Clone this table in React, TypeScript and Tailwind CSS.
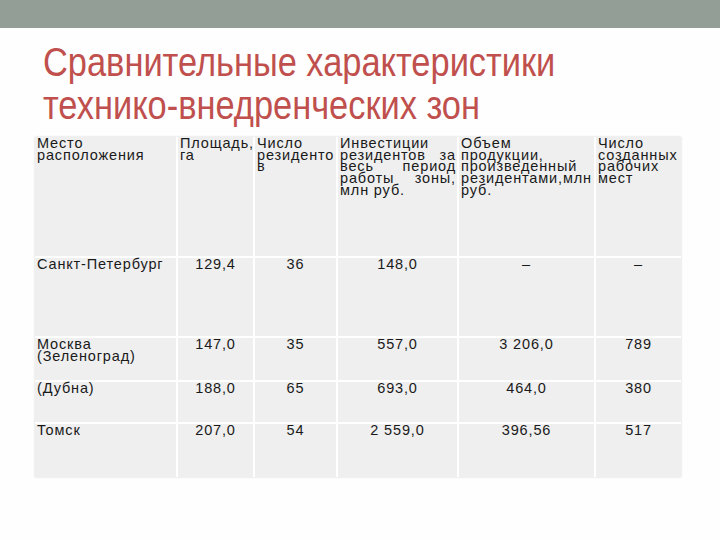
import React from 'react';

const cellText = "font-['Liberation_Sans',Arial,sans-serif] text-[14.5px] leading-[11.7px] tracking-[0.85px] text-[#1a1a1a]";

const rows = [
  { place: ['Санкт-Петербург'], area: '129,4', residents: '36', invest: '148,0', output: '–', jobs: '–' },
  { place: ['Москва', '(Зеленоград)'], area: '147,0', residents: '35', invest: '557,0', output: '3 206,0', jobs: '789' },
  { place: ['(Дубна)'], area: '188,0', residents: '65', invest: '693,0', output: '464,0', jobs: '380' },
  { place: ['Томск'], area: '207,0', residents: '54', invest: '2 559,0', output: '396,56', jobs: '517' },
];

function Cell({ children, center }: { children: React.ReactNode; center?: boolean }) {
  return (
    <div className={`bg-[#efefef] pt-[1px] whitespace-nowrap ${center ? 'text-center' : 'pl-[2px]'} ${cellText}`}>
      {children}
    </div>
  );
}

export default function App() {
  return (
    <div className="w-[720px] h-[540px] bg-[#fefefe] overflow-hidden">
      <div className="h-[28px] bg-[#939f96]" />

      <h1 className="ml-[43px] mt-[13px] origin-left scale-x-[0.86] whitespace-nowrap font-['Liberation_Sans',Arial,sans-serif] text-[40px] leading-[43px] font-normal text-[#c0504d]">
        Сравнительные характеристики
        <br />
        технико-внедренческих зон
      </h1>

      <div className="ml-[35px] mt-[10px] w-[646px] grid grid-cols-[141px_75px_81px_119px_135px_85px] grid-rows-[119px_78px_42px_40px_53px] gap-[2px] bg-white shadow-[0_0_2px_rgba(0,0,0,0.18)]">
        {/* Header */}
        <Cell>
          Место
          <br />
          расположения
        </Cell>
        <Cell>
          Площадь,
          <br />
          га
        </Cell>
        <Cell>
          Число
          <br />
          резиденто
          <br />в
        </Cell>
        <Cell>
          <div className="pr-[1px]">
            <div>Инвестиции</div>
            <div className="flex justify-between">
              <span>резидентов</span>
              <span>за</span>
            </div>
            <div className="flex justify-between">
              <span>весь</span>
              <span>период</span>
            </div>
            <div className="flex justify-between">
              <span>работы</span>
              <span>зоны,</span>
            </div>
            <div>млн руб.</div>
          </div>
        </Cell>
        <Cell>
          Объем
          <br />
          продукции,
          <br />
          произведенный
          <br />
          резидентами,млн
          <br />
          руб.
        </Cell>
        <Cell>
          Число
          <br />
          созданных
          <br />
          рабочих
          <br />
          мест
        </Cell>

        {/* Body */}
        {rows.map((r, i) => (
          <React.Fragment key={i}>
            <Cell>
              {r.place.map((p, j) => (
                <div key={j}>{p}</div>
              ))}
            </Cell>
            <Cell center>{r.area}</Cell>
            <Cell center>{r.residents}</Cell>
            <Cell center>{r.invest}</Cell>
            <Cell center>{r.output}</Cell>
            <Cell center>{r.jobs}</Cell>
          </React.Fragment>
        ))}
      </div>
    </div>
  );
}
